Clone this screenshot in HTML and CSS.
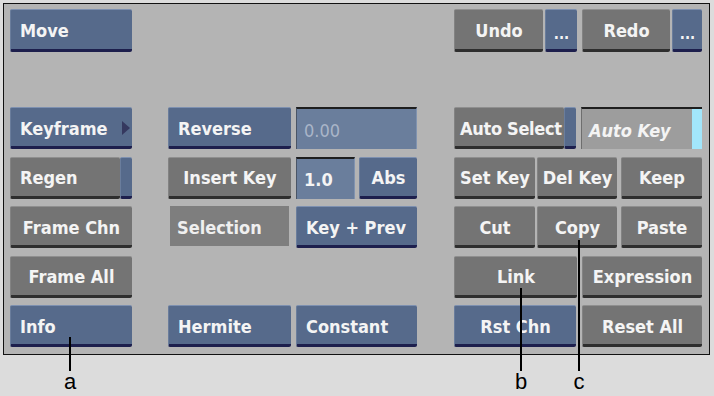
FILE: index.html
```html
<!DOCTYPE html>
<html lang="en">
<head>
  <meta charset="UTF-8" />
  <title>Channel Editor</title>
  <link rel="stylesheet" href="styles.css">
</head>
<body>

  <div class="panel">
    <!-- left column -->
    <div class="col">
      <div class="btn blue top">Move</div>
      <div></div>
      <div class="btn blue">Keyframe <span class="arrow"></span></div>
      <div class="split">
        <div class="btn gray grow">Regen</div>
        <div class="btn blue strip"></div>
      </div>
      <div class="btn gray center">Frame Chn</div>
      <div class="btn gray center">Frame All</div>
      <div class="btn blue">Info</div>
    </div>

    <!-- middle column -->
    <div class="col mid">
      <div></div>
      <div></div>
      <div class="row">
        <div class="btn blue w123">Reverse</div>
        <div class="field dim w121">0.00</div>
      </div>
      <div class="row">
        <div class="btn gray center w123">Insert Key</div>
        <div class="field w59">1.0</div>
        <div class="btn blue center w58 gap4">Abs</div>
      </div>
      <div class="row">
        <div class="label">Selection</div>
        <div class="btn blue w121">Key + Prev</div>
      </div>
      <div></div>
      <div class="row">
        <div class="btn blue w123">Hermite</div>
        <div class="btn blue w121">Constant</div>
      </div>
    </div>

    <!-- right column -->
    <div class="col">
      <div class="row tight">
        <div class="btn gray center top w89">Undo</div>
        <div class="btn blue center top dots w32">...</div>
        <div class="btn gray center top w88 gap5">Redo</div>
        <div class="btn blue center top dots w30">...</div>
      </div>
      <div></div>
      <div class="row">
        <div class="split w122">
          <div class="btn gray grow snug">Auto Select</div>
          <div class="btn blue strip"></div>
        </div>
        <div class="field grey w121"><span class="grow">Auto Key</span><span class="cyan"></span></div>
      </div>
      <div class="row tight">
        <div class="btn gray center w81">Set Key</div>
        <div class="btn gray center w80">Del Key</div>
        <div class="btn gray center w81 gap4r">Keep</div>
      </div>
      <div class="row tight">
        <div class="btn gray center w81">Cut</div>
        <div class="btn gray center w80">Copy</div>
        <div class="btn gray center w81 gap4r">Paste</div>
      </div>
      <div class="row">
        <div class="btn gray center w123">Link</div>
        <div class="btn gray center w120">Expression</div>
      </div>
      <div class="row">
        <div class="btn blue center w122">Rst Chn</div>
        <div class="btn gray center w120 gap6">Reset All</div>
      </div>
    </div>
  </div>

  <!-- callouts -->
  <div class="callout" style="left:69px; top:337px; height:34px;"></div>
  <div class="callout" style="left:520px; top:288px; height:83px;"></div>
  <div class="callout" style="left:578px; top:240px; height:131px;"></div>
  <div class="tag" style="left:60px;">a</div>
  <div class="tag" style="left:511px;">b</div>
  <div class="tag" style="left:569px;">c</div>

</body>
</html>
```

FILE: styles.css
```css
body {
  margin: 0;
  height: 396px;
  overflow: hidden;
  position: relative;
  background-color: #dcdcdc;
  font-family: "DejaVu Sans Condensed", "DejaVu Sans", sans-serif;
  font-stretch: condensed;
}

.panel {
  display: flex;
  gap: 36px;
  width: 707px;
  box-sizing: border-box;
  margin: 3px 0 0 3px;
  padding: 5px 7px 7px 6px;
  border: 1px solid #111;
  background-color: #b4b4b4;
}

.col {
  display: grid;
  grid-template-rows: 43px 40px repeat(5, 42px);
  row-gap: 7.5px;
  width: 122px;
}

.col.mid {
  width: 250px;
}

.col:last-child {
  width: 248px;
}

.row {
  display: flex;
  gap: 5px;
}

.row.tight {
  gap: 2px;
}

.btn {
  box-sizing: border-box;
  display: flex;
  align-items: center;
  padding: 2px 9px 0 9px;
  color: #f4f4f4;
  font-size: 18px;
  font-weight: bold;
  white-space: nowrap;
  border-top: 1px solid;
  border-left: 1px solid;
  border-bottom: 3px solid;
  border-radius: 2px;
}

.blue {
  background-color: #566a8b;
  border-top-color: #7d90b0;
  border-left-color: #6a7d9c;
  border-bottom-color: #1d1f4d;
}

.gray {
  background-color: #747474;
  border-top-color: #8f8f8f;
  border-left-color: #838383;
  border-bottom-color: #2e2e2e;
}

.center {
  justify-content: center;
  padding: 2px 2px 0 2px;
}

.dots {
  font-size: 15px;
  padding-top: 8px;
}

.arrow {
  margin-left: auto;
  margin-right: -7px;
  border-left: 8px solid #35385f;
  border-top: 7px solid transparent;
  border-bottom: 7px solid transparent;
}

.split {
  display: flex;
}

.grow {
  flex: 1;
  min-width: 0;
}

.snug {
  padding: 2px 0 0 5px;
  overflow: hidden;
  letter-spacing: -0.3px;
}

.strip {
  flex: none;
  width: 12px;
  padding: 0;
}

.field {
  box-sizing: border-box;
  display: flex;
  align-items: center;
  padding: 2px 0 0 7px;
  background-color: #6a7e9c;
  border-top: 2px solid #1e1e1e;
  border-left: 1px solid #4a5566;
  border-right: 1px solid #8093b0;
  color: #f4f4f4;
  font-size: 18px;
  font-weight: bold;
}

.field.dim {
  color: #a9b5c8;
  font-weight: normal;
}

.field.grey {
  background-color: #9d9d9d;
  border-left-color: #6e6e6e;
  border-right: none;
  font-style: italic;
  padding-top: 0;
}

.field.grey .grow {
  padding-top: 2px;
}

.cyan {
  align-self: stretch;
  width: 10px;
  background-color: #a2e6fb;
}

.label {
  box-sizing: border-box;
  width: 119px;
  margin: 0 2px 2px 2px;
  padding: 2px 0 0 7px;
  display: flex;
  align-items: center;
  background-color: #7e7e7e;
  color: #efefef;
  font-size: 18px;
  font-weight: bold;
}

.w30 { width: 30px; }
.w32 { width: 32px; }
.w58 { width: 58px; }
.w59 { width: 59px; }
.w80 { width: 80px; }
.w81 { width: 81px; }
.w88 { width: 88px; }
.w89 { width: 89px; }
.w120 { width: 120px; }
.w121 { width: 121px; }
.w122 { width: 122px; }
.w123 { width: 123px; }

.gap4 { margin-left: -1px; }
.gap4r { margin-left: 2px; }
.gap5 { margin-left: 3px; }
.gap6 { margin-left: 1px; }

.callout {
  position: absolute;
  width: 2px;
  background-color: #000;
}

.tag {
  position: absolute;
  top: 369px;
  width: 20px;
  text-align: center;
  font-family: "Liberation Sans", Arial, sans-serif;
  font-size: 22px;
  color: #000;
}
```
